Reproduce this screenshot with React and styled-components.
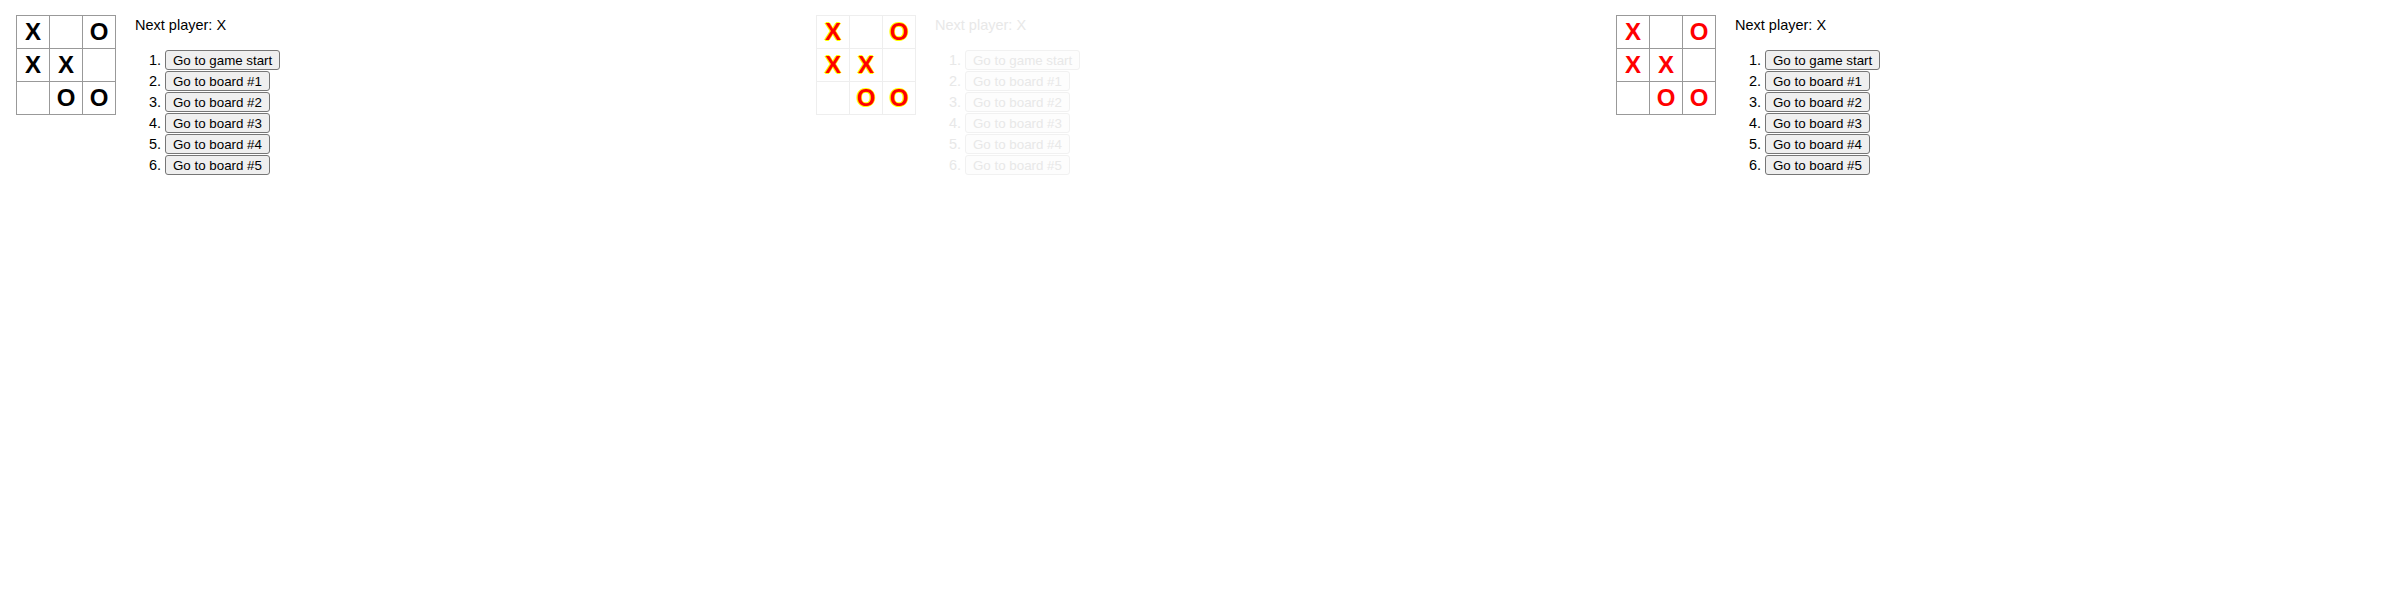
import React from "react";
import styled, { createGlobalStyle } from "styled-components";

const GlobalStyle = createGlobalStyle`
  body {
    margin: 0;
    background: #fff;
    font: 14.5px "Century Gothic", Futura, "Liberation Sans", sans-serif;
  }
`;

const Page = styled.div`
  display: grid;
  grid-template-columns: repeat(3, 800px);
`;

const Game = styled.div`
  display: flex;
  flex-direction: row;
  align-items: flex-start;
  padding: 15px 0 0 16px;
  color: ${(p) => (p.$faded ? "#e8e8e8" : "#000")};
`;

const Board = styled.div`
  display: grid;
  grid-template-columns: repeat(3, 33px);
  grid-auto-rows: 33px;
  border-left: 1px solid ${(p) => (p.$faded ? "#eeeeee" : "#999")};
  border-top: 1px solid ${(p) => (p.$faded ? "#eeeeee" : "#999")};
`;

const Square = styled.div`
  border-right: 1px solid ${(p) => (p.$faded ? "#eeeeee" : "#999")};
  border-bottom: 1px solid ${(p) => (p.$faded ? "#eeeeee" : "#999")};
  display: flex;
  align-items: center;
  justify-content: center;
  font: bold 24px "Liberation Sans", Arial, sans-serif;
  color: ${(p) => p.$color};
  text-shadow: ${(p) =>
    p.$outline
      ? "1px 0 0 #ff0, -1px 0 0 #ff0, 0 1px 0 #ff0, 0 -1px 0 #ff0"
      : "none"};
`;

const Info = styled.div`
  margin-left: 19px;
`;

const Status = styled.div`
  line-height: 20px;
`;

const Moves = styled.ol`
  margin: 15px 0 0;
  padding-left: 30px;
`;

const Move = styled.li`
  height: 21px;
  line-height: 20px;
`;

const MoveButton = styled.button`
  height: 20px;
  padding: 0 7px;
  margin: 0;
  font: 13.333px "Liberation Sans", Arial, sans-serif;
  color: ${(p) => (p.$faded ? "#e8e8e8" : "#000")};
  background: ${(p) => (p.$faded ? "#fdfdfd" : "#efefef")};
  border: 1px solid ${(p) => (p.$faded ? "#f1f1f1" : "#767676")};
  border-radius: 3px;
  vertical-align: top;
`;

const squares = ["X", null, "O", "X", "X", null, null, "O", "O"];
const moves = [
  "Go to game start",
  "Go to board #1",
  "Go to board #2",
  "Go to board #3",
  "Go to board #4",
  "Go to board #5",
];

function TicTacToe({ color, outline, faded }) {
  return (
    <Game $faded={faded}>
      <Board $faded={faded}>
        {squares.map((v, i) => (
          <Square key={i} $color={color} $outline={outline} $faded={faded}>
            {v}
          </Square>
        ))}
      </Board>
      <Info>
        <Status>Next player: X</Status>
        <Moves>
          {moves.map((m) => (
            <Move key={m}>
              <MoveButton $faded={faded}>{m}</MoveButton>
            </Move>
          ))}
        </Moves>
      </Info>
    </Game>
  );
}

export default function App() {
  return (
    <>
      <GlobalStyle />
      <Page>
        <TicTacToe color="#000" />
        <TicTacToe color="#f00" outline faded />
        <TicTacToe color="#f00" />
      </Page>
    </>
  );
}
